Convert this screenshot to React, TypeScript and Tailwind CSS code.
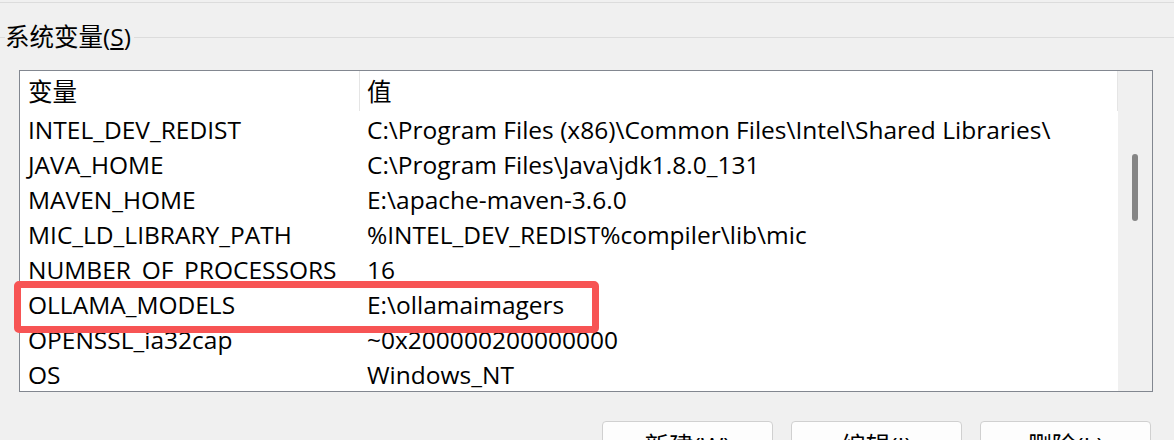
import React from 'react'

const rows = [
  ['INTEL_DEV_REDIST', 'C:\\Program Files (x86)\\Common Files\\Intel\\Shared Libraries\\'],
  ['JAVA_HOME', 'C:\\Program Files\\Java\\jdk1.8.0_131'],
  ['MAVEN_HOME', 'E:\\apache-maven-3.6.0'],
  ['MIC_LD_LIBRARY_PATH', '%INTEL_DEV_REDIST%compiler\\lib\\mic'],
  ['NUMBER_OF_PROCESSORS', '16'],
  ['OLLAMA_MODELS', 'E:\\ollamaimagers'],
  ['OPENSSL_ia32cap', '~0x200000200000000'],
  ['OS', 'Windows_NT'],
]

export default function App() {
  return (
    <div className="relative w-[1174px] h-[440px] overflow-hidden bg-[#f0f0f0] text-black text-[24.5px] font-['Open_Sans','Noto_Sans_CJK_SC',sans-serif]">
      <div className="h-px mt-[2px] bg-[#dcdcdc]" />

      {/* 分组标题 */}
      <div className="flex items-center h-[30px] mt-[19px]">
        <div className="w-[5px] h-px bg-[#dcdcdc]" />
        <span className="leading-none">
          系统变量(<span className="underline underline-offset-2">S</span>)
        </span>
        <div className="flex-1 h-px ml-[3px] bg-[#dcdcdc]" />
      </div>

      {/* 列表 */}
      <div className="flex ml-[19px] mt-[18px] w-[1134px] h-[322px] border border-[#828790] bg-white">
        <div className="flex-1 flex flex-col">
          <div className="flex h-[40px] items-center">
            <div className="w-[340px] pl-[8px] pt-[3px] h-full flex items-center border-r border-[#e5e5e5]">变量</div>
            <div className="flex-1 pl-[7px] pt-[3px] h-full flex items-center border-r border-[#e5e5e5]">值</div>
          </div>
          {rows.map(([k, v]) => (
            <div key={k} className="flex h-[35px] pt-[3px] items-center whitespace-nowrap">
              <div className="w-[340px] pl-[8px]">{k}</div>
              <div className="flex-1 pl-[7px]">{v}</div>
            </div>
          ))}
        </div>
        <div className="w-[34px] bg-[#f0f0f0] flex justify-center">
          <div className="w-[6px] h-[67px] mt-[83px] rounded-full bg-[#858585]" />
        </div>
      </div>

      {/* 标注框 */}
      <div className="absolute left-[14px] top-[281px] w-[585px] h-[52px] border-[7px] border-[#f75454] rounded-[5px]" />

      {/* 按钮 */}
      <div className="flex gap-[18px] ml-[602px] mt-[29px]">
        {['新建(W)', '编辑(I)', '删除(L)'].map((t) => (
          <div key={t} className="w-[171px] h-[50px] flex items-center justify-center rounded-[4px] border border-[#d0d0d0] bg-[#fdfdfd]">
            {t}
          </div>
        ))}
      </div>
    </div>
  )
}
